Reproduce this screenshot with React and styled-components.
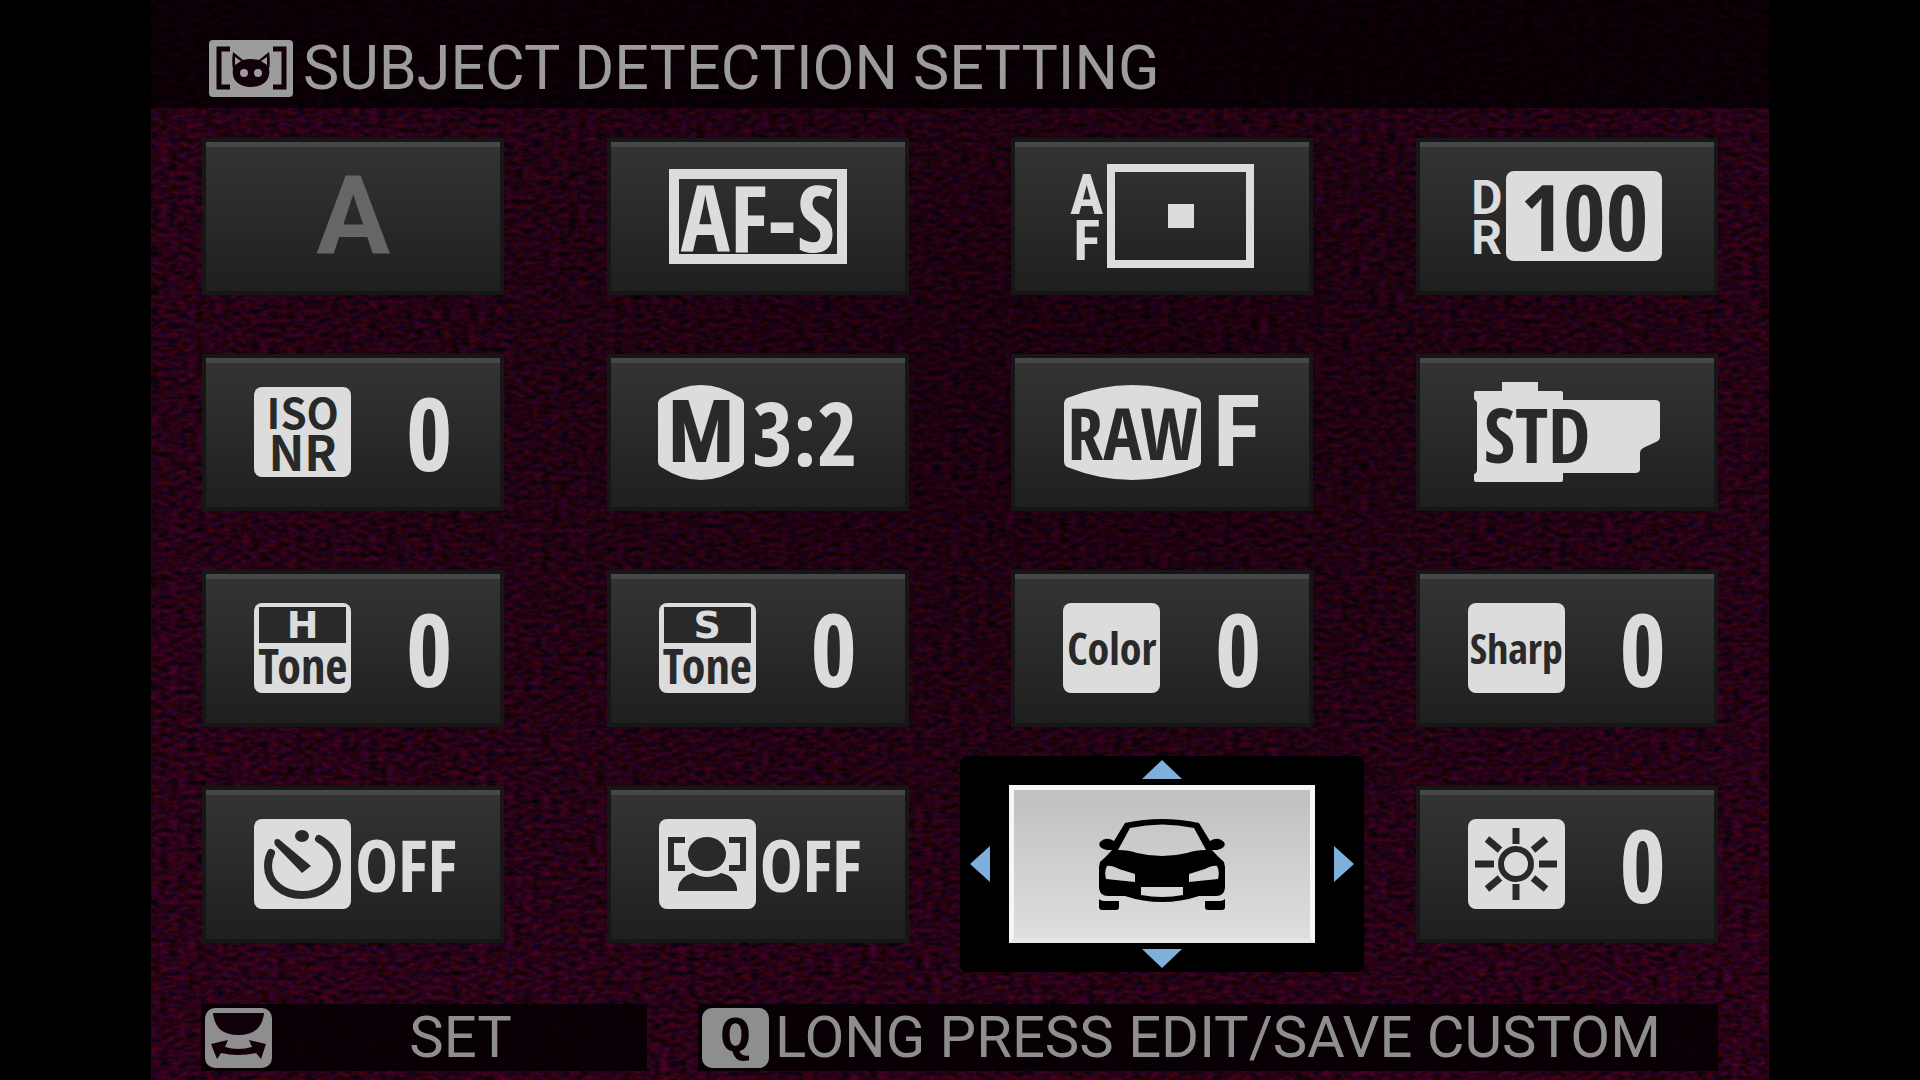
import React from "react";
import styled, { createGlobalStyle } from "styled-components";

const ink = "#292929";
const light = "#dcdcdc";

const fonts = {
  body: '"Roboto", "Liberation Sans", sans-serif',
  narrow: '"Open Sans Condensed", "Roboto Condensed", sans-serif',
  condensed: '"Roboto Condensed", "Liberation Sans", sans-serif',
  humanist: '"Noto Sans CJK JP", "Noto Sans", sans-serif',
  wide: '"DejaVu Sans", sans-serif',
  mono: '"Liberation Mono", monospace',
};

const GlobalStyle = createGlobalStyle`
  *, *::before, *::after { box-sizing: border-box; }
  body { margin: 0; background: #000; font-family: ${fonts.body}; }
  button { margin: 0; padding: 0; border: 0; background: none; font: inherit; color: inherit; cursor: pointer; }
  h1 { margin: 0; }
  svg { display: block; flex: none; }
`;

const Screen = styled.main`
  position: relative;
  isolation: isolate;
  max-width: 1618px;
  min-height: 100vh;
  margin: 0 auto;
  display: flex;
  flex-direction: column;
  overflow: hidden;
  background: #25021a;
`;

const Grain = styled.svg`
  position: absolute;
  inset: 0;
  z-index: -1;
  width: 100%;
  height: 100%;
`;

const Header = styled.header`
  display: flex;
  align-items: center;
  gap: 10px;
  min-height: 108px;
  padding: 28px 58px 0;
  background: rgba(0, 0, 0, 0.7);
`;

const Title = styled.h1`
  font-size: 61px;
  line-height: 72px;
  font-weight: 400;
  color: #9c9c9c;
  white-space: nowrap;
`;

const Grid = styled.div`
  display: grid;
  grid-template-columns: repeat(4, minmax(0, 1fr));
  grid-auto-rows: minmax(216px, auto);
  place-items: center;
`;

const Tile = styled.button`
  display: flex;
  align-items: center;
  justify-content: ${(p) => p.$align || "center"};
  gap: ${(p) => p.$gap || 4}px;
  width: 302px;
  height: 157px;
  padding: 0 48px;
  border: 4px solid #161616;
  background: linear-gradient(#343434, #1f1f1f);
  box-shadow: inset 0 5px #474747;
  color: ${light};
  white-space: nowrap;
`;

const Glyphs = styled.span`
  font-family: ${(p) => fonts[p.$face || "narrow"]};
  font-size: ${(p) => p.$size}px;
  line-height: ${(p) => p.$line || 90}px;
  font-weight: 700;
  color: ${(p) => p.$color || "inherit"};
`;

const Chip = styled.span`
  display: flex;
  flex: none;
  flex-direction: column;
  align-items: center;
  justify-content: center;
  width: ${(p) => p.$width || 97}px;
  height: 90px;
  border-radius: 8px;
  background: ${light};
  color: ${ink};
`;

const Frame = styled.span`
  display: grid;
  place-items: center;
  width: ${(p) => p.$width}px;
  height: ${(p) => p.$height}px;
  border: ${(p) => p.$stroke}px solid ${light};
`;

const Point = styled.span`
  width: 26px;
  height: 24px;
  background: ${light};
`;

const Stack = styled.span`
  display: flex;
  flex-direction: column;
  align-items: center;
  padding-top: 4px;
`;

const TonePanel = styled.span`
  display: grid;
  place-items: center;
  width: 87px;
  height: 36px;
  background: ${ink};
  color: ${light};
`;

const Badge = styled.span`
  display: grid;
  align-items: center;
  justify-items: ${(p) => p.$justify || "center"};
  color: ${ink};
  > * { grid-area: 1 / 1; }
`;

const BadgeLabel = styled(Glyphs)`
  padding: 4px 0 0 10px;
`;

const Selected = styled.div`
  display: grid;
  grid-template-columns: 20px 306px 20px;
  grid-template-rows: 19px 158px 19px;
  gap: 6px 19px;
  place-items: center;
  padding: 4px 10px;
  border-radius: 8px;
  background: #000;
`;

const ActiveTile = styled.button`
  display: grid;
  place-items: center;
  grid-area: 2 / 2;
  width: 100%;
  height: 100%;
  border: 5px solid #f6f6f6;
  border-bottom-color: #e6e6e6;
  background: linear-gradient(#c0c0c0, #dedede);
`;

const Arrow = styled.button`
  grid-area: ${(p) => p.$area};
  color: #7fb0dc;
`;

const Footer = styled.footer`
  display: grid;
  grid-template-columns: 446fr 1020fr;
  gap: 51px;
  padding: 32px 51px 9px 50px;
`;

const Hint = styled.button`
  display: flex;
  align-items: center;
  gap: 6px;
  min-height: 67px;
  padding: 0 4px;
  background: rgba(4, 0, 3, 0.88);
  color: #8e8e8e;
  font-size: 58px;
  line-height: 67px;
  white-space: nowrap;
`;

const HintLabel = styled.span`
  flex: 1;
  text-align: ${(p) => p.$align || "left"};
`;

const Key = styled.span`
  display: grid;
  place-items: center;
  flex: none;
  width: 67px;
  height: 60px;
  border-radius: 10px;
  background: #8e8e8e;
  color: #0c0007;
  font: 700 50px/60px ${fonts.mono};
`;

function GrainLayer() {
  return (
    <Grain aria-hidden="true">
      <defs>
        <filter id="grain" x="0" y="0" width="100%" height="100%" colorInterpolationFilters="sRGB">
          <feTurbulence type="fractalNoise" baseFrequency="0.11 0.21" numOctaves="4" seed="11" />
          <feColorMatrix values="0.42 0 0 0 -0.05  0 0 0 0 0.006  0.12 0 0.28 0 -0.11  0 0 0 0 1" />
        </filter>
        <radialGradient id="shade" cx="0.55" cy="0.35" r="0.7">
          <stop offset="0" stopColor="#000" stopOpacity="0.35" />
          <stop offset="1" stopColor="#000" stopOpacity="0" />
        </radialGradient>
      </defs>
      <rect width="100%" height="100%" filter="url(#grain)" />
      <rect width="100%" height="100%" fill="url(#shade)" />
    </Grain>
  );
}

function CatIcon() {
  return (
    <svg width="84" height="57" viewBox="0 0 84 57" aria-hidden="true">
      <rect width="84" height="57" rx="4" fill="#9c9c9c" />
      <g fill="none" stroke="#12000a" strokeWidth="5">
        <path d="M21 9H10V47H21" />
        <path d="M64 9H75V47H64" />
      </g>
      <path
        fill="#12000a"
        d="M24 12 C23 18 23 25 24 29 C22 40 30 47 42 47 C54 47 62 40 60 29 C61 25 61 18 60 12 L50 20 Q42 18 34 20 Z"
      />
      <path fill="#9c9c9c" d="M26 17V25L32 21ZM58 17V25L52 21Z" />
      <circle cx="35" cy="33" r="4" fill="#9c9c9c" />
      <circle cx="49" cy="33" r="4" fill="#9c9c9c" />
    </svg>
  );
}

function TimerIcon() {
  return (
    <svg width="97" height="90" viewBox="0 0 97 90" aria-hidden="true">
      <path
        d="M65 20 C76 26 83 36 83 46 C83 64 67 76 48 76 C29 76 14 64 14 47 C14 42 15 38 17 34"
        fill="none"
        stroke={ink}
        strokeWidth="8"
        strokeLinecap="round"
      />
      <ellipse cx="48" cy="17" rx="7" ry="6" fill={ink} />
      <path d="M27 22 L57 47 L48 54 L21 26 Q19 20 23 20 Q26 20 27 22Z" fill={ink} />
    </svg>
  );
}

function FaceIcon() {
  return (
    <svg width="97" height="90" viewBox="0 0 97 90" aria-hidden="true">
      <g fill="none" stroke={ink} strokeWidth="6">
        <path d="M26 21H12V49H26" />
        <path d="M70 21H84V49H70" />
      </g>
      <ellipse cx="48" cy="35" rx="19" ry="17" fill={ink} />
      <path d="M19 72V69Q21 57 34 54Q48 62 62 54Q76 57 78 69V72Z" fill={ink} />
    </svg>
  );
}

function SunIcon() {
  return (
    <svg width="97" height="90" viewBox="0 0 97 90" aria-hidden="true">
      <g fill="none" stroke={ink} strokeWidth="7">
        <circle cx="48" cy="45" r="15" strokeWidth="6" />
        <path d="M48 9V25M48 65V81M7 45H26M71 45H89M19 20L32 31M78 20L65 31M19 70L32 59M78 70L65 59" />
      </g>
    </svg>
  );
}

function CarIcon() {
  return (
    <svg width="126" height="91" viewBox="0 0 126 91" aria-hidden="true">
      <path
        fillRule="evenodd"
        d="M26 4 Q63 -4 100 4 L111 22 Q119 17 125 23 Q128 29 118 31 L113 31 Q118 37 125 43 L126 48 V69 Q125 77 117 77 H100 Q82 83 63 83 Q44 83 26 77 H9 Q1 77 0 69 V48 L1 43 Q8 37 13 31 L8 31 Q-2 29 1 23 Q7 17 15 22 Z M31 9 L19 31 Q30 31 38 34 Q50 37 63 37 Q76 37 88 34 Q96 31 107 31 L95 9 Q63 2 31 9 Z M8 47 Q12 46 20 50 L36 55 V63 L7 60 Q5 52 8 47 Z M118 47 Q114 46 106 50 L90 55 V63 L119 60 Q121 52 118 47 Z M42 68 V76 Q63 80 84 76 V68 Z"
      />
      <path d="M0 80 Q2 82 7 82 H20 V88 Q20 91 17 91 H3 Q0 91 0 88 Z M126 80 Q124 82 119 82 H106 V88 Q106 91 109 91 H123 Q126 91 126 88 Z" />
    </svg>
  );
}

function DialIcon() {
  return (
    <svg width="67" height="60" viewBox="0 0 67 60" aria-hidden="true">
      <rect width="67" height="60" rx="10" fill="#8e8e8e" />
      <path d="M8 5H59Q57 27 33 27Q10 27 8 5Z" fill="#12000a" />
      <path
        d="M6 36 L23 32 L20 39 Q33 43 47 39 L44 32 L61 36 L56 51 L51 45 Q33 49 16 45 L12 51 Z"
        fill="#12000a"
      />
    </svg>
  );
}

function FilmIcon() {
  return (
    <svg width="186" height="100" viewBox="0 0 186 100" aria-hidden="true">
      <path
        fill={light}
        d="M2 9H28V0H64V9H87Q89 9 89 11V18H181Q186 18 186 22V55Q186 58 182 60L171 65Q166 67 166 71V87Q166 91 161 91H89V98Q89 100 87 100H2Q0 100 0 98V92Q3 91 3 88V20L0 17V11Q0 9 2 9Z"
      />
    </svg>
  );
}

function BarrelIcon({ width }) {
  return (
    <svg width={width} height="95" viewBox={`0 0 ${width} 95`} aria-hidden="true">
      <path
        fill={light}
        d={`M3 13 Q${width / 2} -13 ${width - 3} 13 Q${width} 15 ${width} 18 V77 Q${width} 80 ${width - 3} 82 Q${width / 2} 108 3 82 Q0 80 0 77 V18 Q0 15 3 13Z`}
      />
    </svg>
  );
}

const arrowShapes = {
  up: [40, 19, "M0 19L20 0L40 19Z"],
  down: [40, 19, "M0 0L20 19L40 0Z"],
  left: [20, 36, "M20 0L0 18L20 36Z"],
  right: [20, 36, "M0 0L20 18L0 36Z"],
};

function ArrowButton({ direction, area }) {
  const [w, h, d] = arrowShapes[direction];
  return (
    <Arrow $area={area} aria-label={direction}>
      <svg width={w} height={h} viewBox={`0 0 ${w} ${h}`}>
        <path d={d} fill="currentColor" />
      </svg>
    </Arrow>
  );
}

function LevelTile({ children }) {
  return (
    <Tile $align="space-between">
      <Chip>{children}</Chip>
      <Glyphs $size={100} $line={86}>0</Glyphs>
    </Tile>
  );
}

function ToneChip({ letter }) {
  return (
    <>
      <TonePanel>
        <Glyphs $face="wide" $size={38} $line={36}>{letter}</Glyphs>
      </TonePanel>
      <Glyphs $size={48} $line={46}>Tone</Glyphs>
    </>
  );
}

function SwitchTile({ children }) {
  return (
    <Tile $align="flex-start">
      <Chip>{children}</Chip>
      <Glyphs $size={72}>OFF</Glyphs>
    </Tile>
  );
}

export default function App() {
  return (
    <>
      <GlobalStyle />
      <Screen>
        <GrainLayer />
        <Header>
          <CatIcon />
          <Title>SUBJECT DETECTION SETTING</Title>
        </Header>
        <Grid>
          <Tile>
            <Glyphs $face="body" $size={110} $color="#666">A</Glyphs>
          </Tile>
          <Tile>
            <Frame $width={178} $height={95} $stroke={10}>
              <Glyphs $size={92} $line={75}>AF-S</Glyphs>
            </Frame>
          </Tile>
          <Tile>
            <Stack>
              <Glyphs $face="condensed" $size={56} $line={46}>A</Glyphs>
              <Glyphs $face="condensed" $size={56} $line={46}>F</Glyphs>
            </Stack>
            <Frame $width={147} $height={104} $stroke={8}>
              <Point />
            </Frame>
          </Tile>
          <Tile>
            <Stack>
              <Glyphs $face="body" $size={48} $line={40}>D</Glyphs>
              <Glyphs $face="body" $size={48} $line={40}>R</Glyphs>
            </Stack>
            <Chip $width={156}>
              <Glyphs $size={92}>100</Glyphs>
            </Chip>
          </Tile>

          <LevelTile>
            <Glyphs $face="humanist" $size={42} $line={36}>ISO</Glyphs>
            <Glyphs $face="humanist" $size={48} $line={42}>NR</Glyphs>
          </LevelTile>
          <Tile $gap={8}>
            <Badge>
              <BarrelIcon width={86} />
              <Glyphs $face="condensed" $size={88}>M</Glyphs>
            </Badge>
            <Glyphs $size={88}>3:2</Glyphs>
          </Tile>
          <Tile $gap={12}>
            <Badge>
              <BarrelIcon width={137} />
              <Glyphs $size={72}>RAW</Glyphs>
            </Badge>
            <Glyphs $face="condensed" $size={100}>F</Glyphs>
          </Tile>
          <Tile>
            <Badge $justify="start">
              <FilmIcon />
              <BadgeLabel $size={76}>STD</BadgeLabel>
            </Badge>
          </Tile>

          <LevelTile>
            <ToneChip letter="H" />
          </LevelTile>
          <LevelTile>
            <ToneChip letter="S" />
          </LevelTile>
          <LevelTile>
            <Glyphs $size={44}>Color</Glyphs>
          </LevelTile>
          <LevelTile>
            <Glyphs $size={42}>Sharp</Glyphs>
          </LevelTile>

          <SwitchTile>
            <TimerIcon />
          </SwitchTile>
          <SwitchTile>
            <FaceIcon />
          </SwitchTile>
          <Selected>
            <ArrowButton direction="up" area="1 / 2" />
            <ArrowButton direction="left" area="2 / 1" />
            <ActiveTile aria-label="Subject detection: car">
              <CarIcon />
            </ActiveTile>
            <ArrowButton direction="right" area="2 / 3" />
            <ArrowButton direction="down" area="3 / 2" />
          </Selected>
          <LevelTile>
            <SunIcon />
          </LevelTile>
        </Grid>
        <Footer>
          <Hint>
            <DialIcon />
            <HintLabel $align="center">SET</HintLabel>
          </Hint>
          <Hint>
            <Key>Q</Key>
            <HintLabel>LONG PRESS EDIT/SAVE CUSTOM</HintLabel>
          </Hint>
        </Footer>
      </Screen>
    </>
  );
}
